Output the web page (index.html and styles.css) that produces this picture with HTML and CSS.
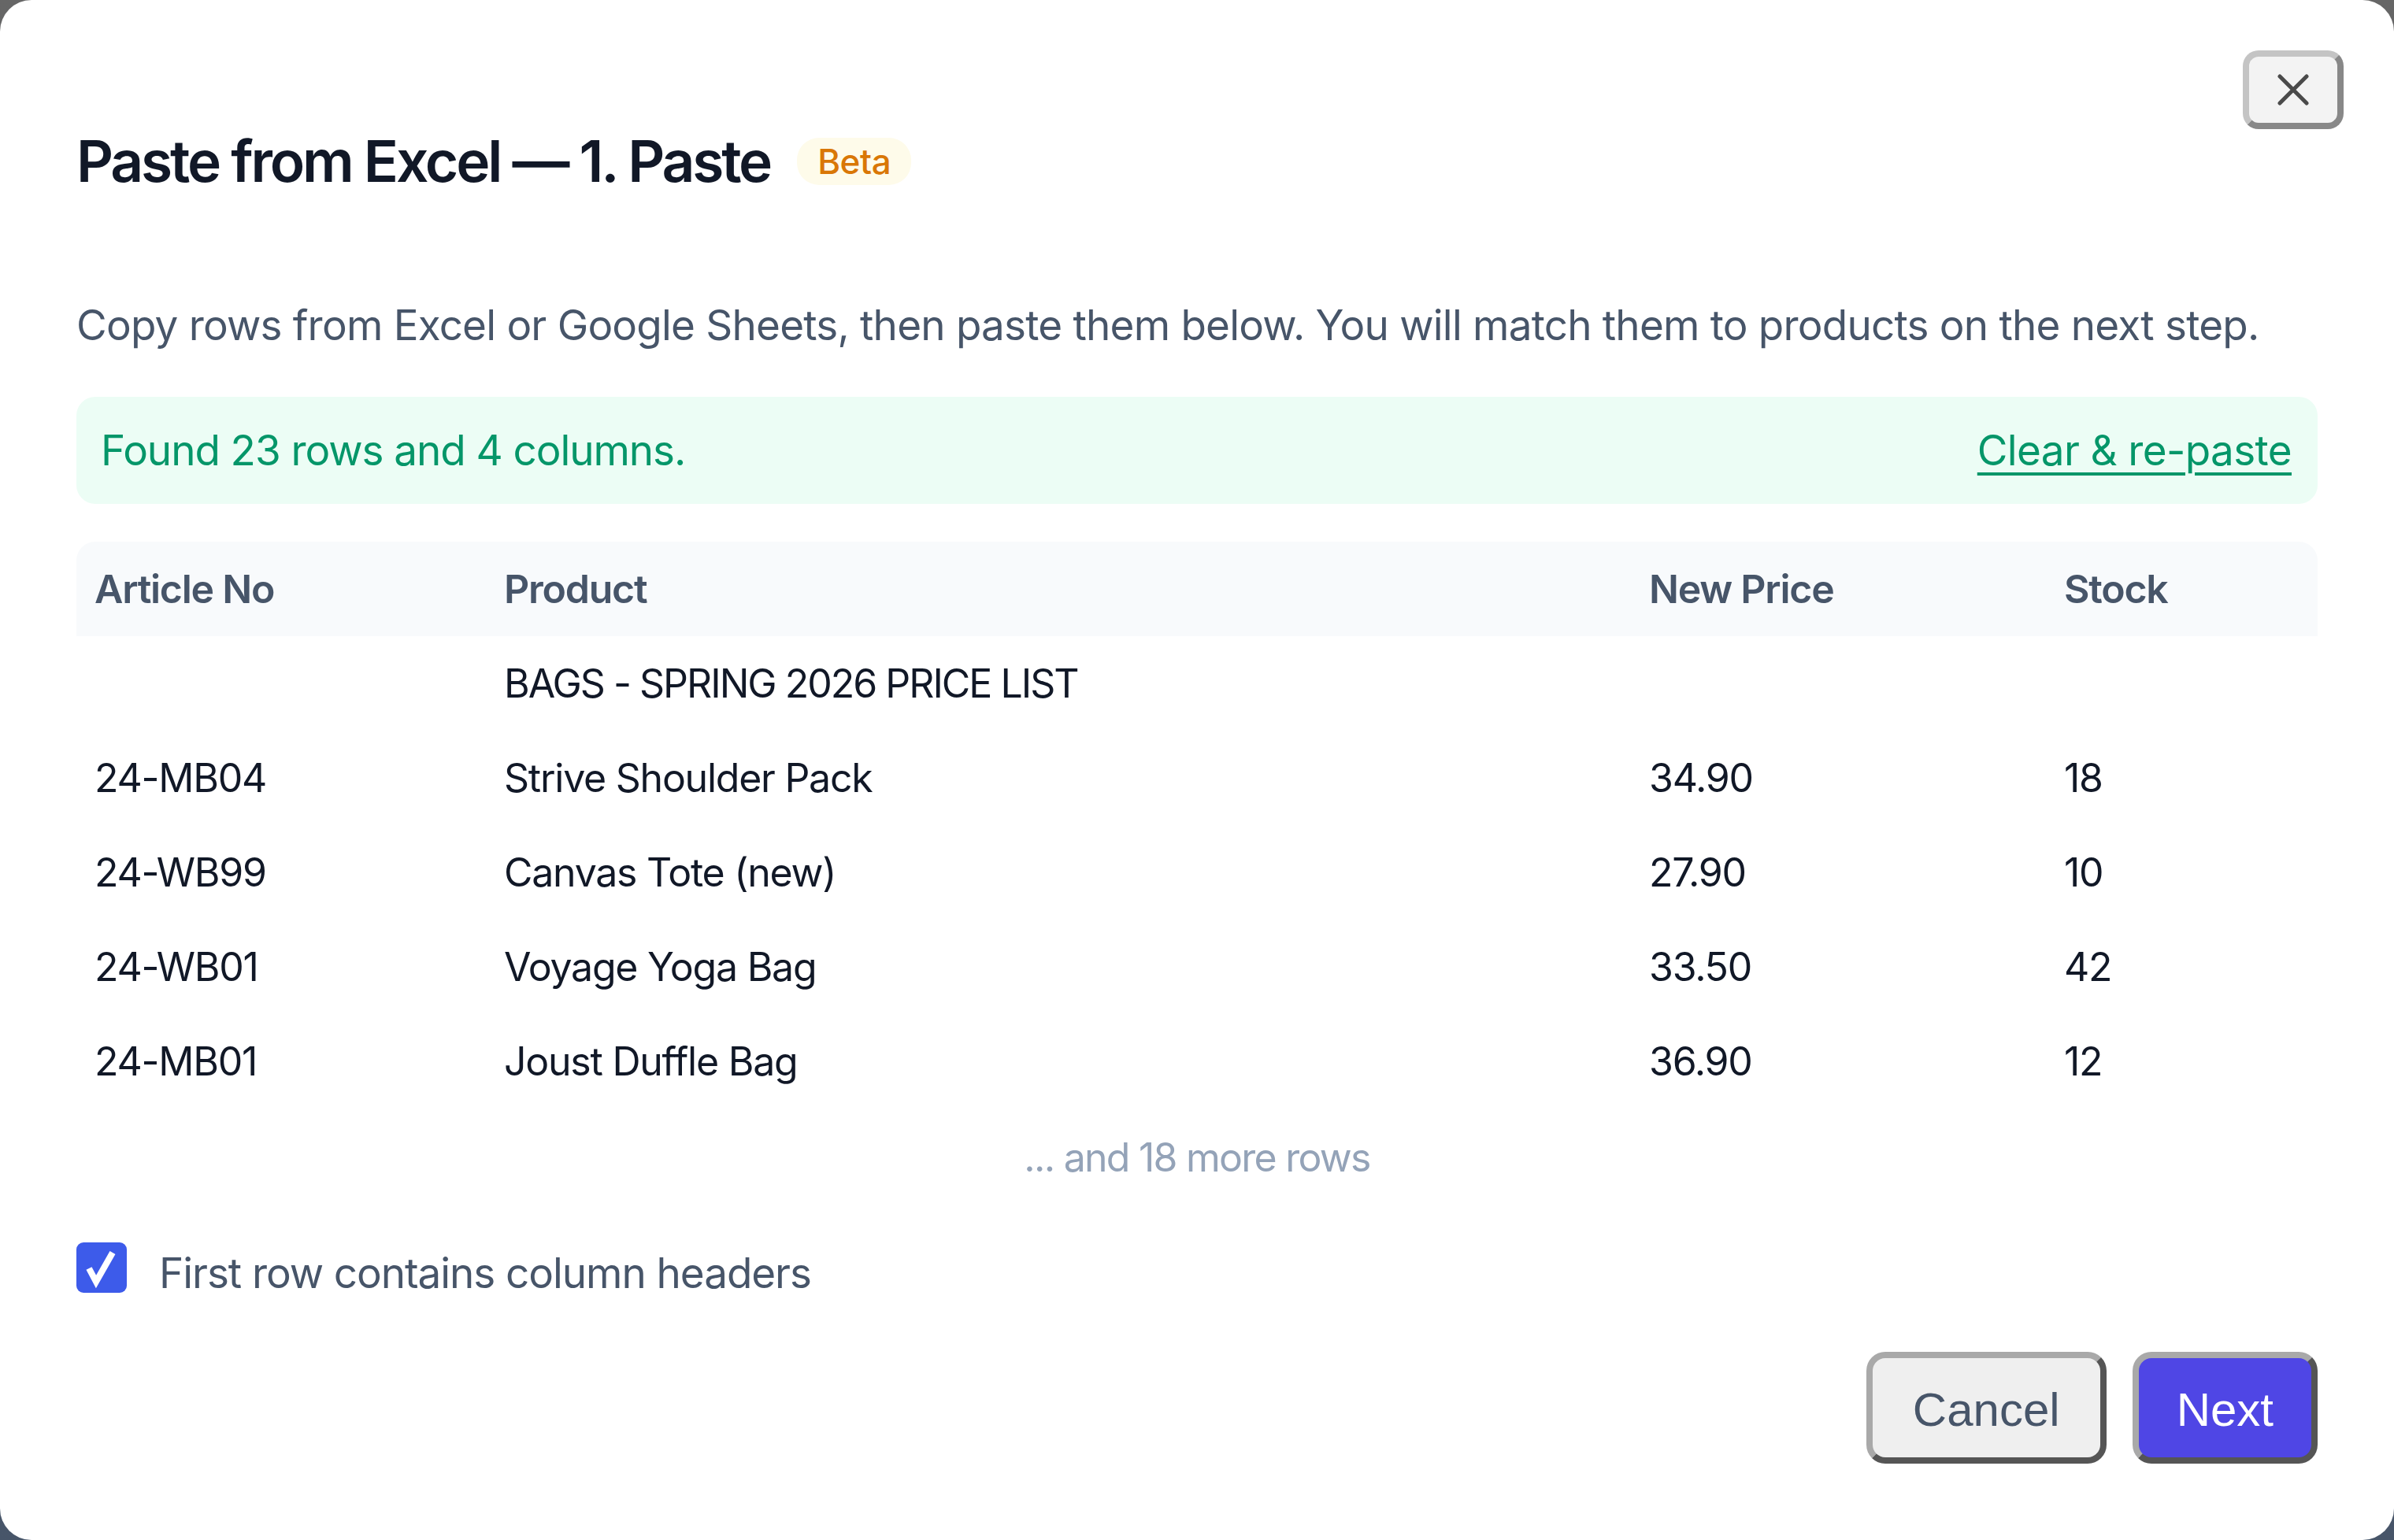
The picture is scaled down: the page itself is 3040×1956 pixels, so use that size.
FILE: index.html
```html
<!DOCTYPE html>
<html lang="en">
<head>
<meta charset="utf-8">
<title>Paste from Excel</title>
<link rel="stylesheet" href="styles.css">
</head>
<body>
<div class="modal">
  <button class="close" aria-label="Close">
    <svg viewBox="0 0 40 40" width="40" height="40"><path d="M3 3 L37 37 M37 3 L3 37" stroke="#4a4a4a" stroke-width="5" stroke-linecap="round" fill="none"/></svg>
  </button>
  <div class="title-row">
    <h1 class="title">Paste from Excel — 1. Paste</h1>
    <span class="badge">Beta</span>
  </div>
  <p class="subtitle">Copy rows from Excel or Google Sheets, then paste them below. You will match them to products on the next step.</p>
  <div class="notice">
    <span>Found 23 rows and 4 columns.</span>
    <a class="notice-link" href="#">Clear &amp; re-paste</a>
  </div>
  <div class="table">
    <div class="row head">
      <div class="cell">Article No</div>
      <div class="cell">Product</div>
      <div class="cell">New Price</div>
      <div class="cell">Stock</div>
    </div>
    <div class="row">
      <div class="cell"></div>
      <div class="cell caps">BAGS - SPRING 2026 PRICE LIST</div>
      <div class="cell"></div>
      <div class="cell"></div>
    </div>
    <div class="row">
      <div class="cell">24-MB04</div>
      <div class="cell">Strive Shoulder Pack</div>
      <div class="cell">34.90</div>
      <div class="cell">18</div>
    </div>
    <div class="row">
      <div class="cell">24-WB99</div>
      <div class="cell">Canvas Tote (new)</div>
      <div class="cell">27.90</div>
      <div class="cell">10</div>
    </div>
    <div class="row">
      <div class="cell">24-WB01</div>
      <div class="cell">Voyage Yoga Bag</div>
      <div class="cell">33.50</div>
      <div class="cell">42</div>
    </div>
    <div class="row">
      <div class="cell">24-MB01</div>
      <div class="cell">Joust Duffle Bag</div>
      <div class="cell">36.90</div>
      <div class="cell">12</div>
    </div>
  </div>
  <div class="more">... and 18 more rows</div>
  <label class="check-row">
    <span class="checkbox">
      <svg viewBox="0 0 64 64" width="64" height="64"><path d="M16 33 L25 50 L46 13" stroke="#fff" stroke-width="8" stroke-linecap="butt" stroke-linejoin="miter" fill="none"/></svg>
    </span>
    <span class="check-label">First row contains column headers</span>
  </label>
  <div class="footer">
    <button class="btn btn-cancel">Cancel</button>
    <button class="btn btn-next">Next</button>
  </div>
</div>
</body>
</html>
```

FILE: styles.css
```css
html, body {
  margin: 0;
  padding: 0;
}
body {
  width: 3040px;
  height: 1956px;
  overflow: hidden;
  background: linear-gradient(#666666, #475569);
  font-family: "Inter", "Liberation Sans", sans-serif;
}
.modal {
  position: relative;
  box-sizing: border-box;
  height: 1956px;
  background: #ffffff;
  border-radius: 40px;
  padding: 160px 97px 97px 97px;
  display: flex;
  flex-direction: column;
}
.close {
  position: absolute;
  top: 64px;
  right: 64px;
  width: 128px;
  height: 100px;
  box-sizing: border-box;
  border: 8px solid;
  border-color: #c4c4c4 #888888 #888888 #c4c4c4;
  border-radius: 20px;
  background: #f3f3f3;
  display: flex;
  align-items: center;
  justify-content: center;
  padding: 0;
}
.close svg { display: block; }
.title-row {
  display: flex;
  align-items: center;
  gap: 34px;
  height: 90px;
}
.title {
  margin: 0;
  font-size: 73px;
  line-height: 90px;
  font-weight: 600;
  color: #111827;
  letter-spacing: -0.043em;
  white-space: nowrap;
}
.badge {
  display: inline-flex;
  align-items: center;
  height: 60px;
  padding: 0 26px;
  border-radius: 28px;
  background: #fefbea;
  color: #d97706;
  font-size: 44px;
  font-weight: 500;
  letter-spacing: -0.01em;
}
.subtitle {
  margin: 131px 0 0 0;
  font-size: 53px;
  line-height: 64px;
  color: #475569;
  letter-spacing: -0.015em;
  white-space: nowrap;
}
.notice {
  margin-top: 59px;
  height: 136px;
  box-sizing: border-box;
  padding: 0 33px 0 31px;
  border-radius: 24px;
  background: #ecfdf5;
  color: #059669;
  font-size: 53px;
  letter-spacing: -0.02em;
  display: flex;
  align-items: center;
  justify-content: space-between;
}
.notice-link {
  color: #059669;
  text-decoration: underline;
  text-decoration-thickness: 4px;
  text-underline-offset: 9px;
  letter-spacing: -0.012em;
}
.table {
  margin-top: 48px;
  display: flex;
  flex-direction: column;
}
.row {
  display: grid;
  grid-template-columns: 520px 1454px 527px 1fr;
  height: 120px;
  align-items: center;
  font-size: 50px;
  color: #111827;
  letter-spacing: -0.025em;
}
.row.head {
  background: #f8fafc;
  border-radius: 24px 24px 0 0;
  color: #475569;
  font-weight: 600;
  letter-spacing: -0.025em;
}
.cell {
  padding: 0 23px;
  white-space: nowrap;
}
.cell.caps {
  letter-spacing: -0.04em;
}
.more {
  padding-top: 32px;
  line-height: 60px;
  font-size: 50px;
  color: #94a3b8;
  text-align: center;
  letter-spacing: -0.035em;
}
.check-row {
  margin-top: 78px;
  display: flex;
  align-items: center;
  gap: 41px;
  height: 64px;
}
.checkbox {
  width: 64px;
  height: 64px;
  border-radius: 9px;
  background: #3d5bea;
  display: block;
  flex: none;
}
.checkbox svg { display: block; }
.check-label {
  font-size: 53px;
  color: #475569;
  letter-spacing: -0.02em;
  padding-top: 14px;
}
.footer {
  margin-top: auto;
  display: flex;
  justify-content: flex-end;
  gap: 33px;
}
.btn {
  height: 142px;
  box-sizing: border-box;
  border: 8px solid;
  border-color: #a9a9a9 #555555 #555555 #a9a9a9;
  border-radius: 24px;
  font-family: "Liberation Sans", Arial, sans-serif;
  font-size: 60px;
  padding: 4px 51px 0 51px;
}
.btn-cancel {
  background: #efefef;
  color: #475569;
}
.btn-next {
  background: #4f46e5;
  color: #ffffff;
  padding: 4px 48px 0 48px;
}
```
